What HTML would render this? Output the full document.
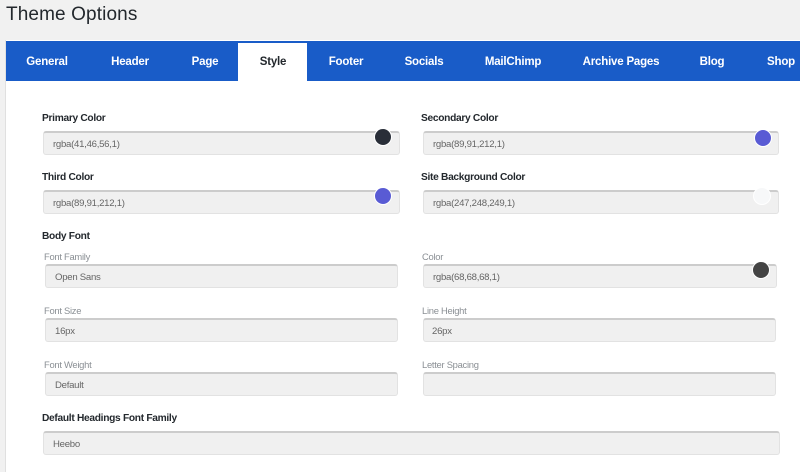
<!DOCTYPE html>
<html><head><meta charset="utf-8"><style>
html,body{margin:0;padding:0}
body{width:800px;height:472px;overflow:hidden;position:relative;background:#f1f1f1;font-family:"Liberation Sans",sans-serif}
.p{position:absolute;left:5px;top:40px;width:795px;height:432px;background:#fff;border-left:1px solid #e0e0e0;box-sizing:border-box}
.bar{position:absolute;left:6px;top:41px;width:794px;height:40px;background:#195cc8}
.act{position:absolute;left:238px;top:43px;width:69px;height:38px;background:#fff}
.t{position:absolute;white-space:nowrap;line-height:16px}
.tab{top:54px;font-size:11.5px;letter-spacing:-.2px;font-weight:bold;color:#fff;transform:translateX(-50%)}
.b{font-size:10.2px;letter-spacing:-.3px;font-weight:bold;color:#23282d}
.l{font-size:9.4px;letter-spacing:-.27px;color:#8a8f94}
.v{font-size:9.6px;letter-spacing:-.27px;color:#666}
.i{position:absolute;height:24px;box-sizing:border-box;background:#f0f0f0;border:1px solid #e2e2e2;border-top:2px solid #ccc;border-radius:3px}
.c{position:absolute;width:18px;height:18px;border-radius:50%;box-sizing:border-box;border:1.5px solid #fff}
</style></head><body>
<div class="t" style="left:6px;top:3px;font-size:19px;letter-spacing:.12px;line-height:24px;color:#23282d">Theme Options</div>
<div class="p"></div>
<div class="bar"></div>
<div class="act"></div>
<span class="t tab" style="left:47px">General</span>
<span class="t tab" style="left:130px">Header</span>
<span class="t tab" style="left:205px">Page</span>
<span class="t tab" style="left:273px;color:#23282d">Style</span>
<span class="t tab" style="left:346px">Footer</span>
<span class="t tab" style="left:424px">Socials</span>
<span class="t tab" style="left:513px">MailChimp</span>
<span class="t tab" style="left:621px">Archive Pages</span>
<span class="t tab" style="left:712px">Blog</span>
<span class="t tab" style="left:781px">Shop</span>

<span class="t b" style="left:42px;top:111px">Primary Color</span>
<div class="i" style="left:43px;top:131px;width:357px"></div>
<span class="t v" style="left:53px;top:137px">rgba(41,46,56,1)</span>
<div class="c" style="left:374px;top:128px;background:#292e38"></div>

<span class="t b" style="left:421px;top:111px">Secondary Color</span>
<div class="i" style="left:423px;top:131px;width:356px"></div>
<span class="t v" style="left:433px;top:137px">rgba(89,91,212,1)</span>
<div class="c" style="left:754px;top:129px;background:#595bd4"></div>

<span class="t b" style="left:42px;top:170px">Third Color</span>
<div class="i" style="left:43px;top:190px;width:357px"></div>
<span class="t v" style="left:53px;top:196px">rgba(89,91,212,1)</span>
<div class="c" style="left:374px;top:187px;background:#595bd4"></div>

<span class="t b" style="left:421px;top:170px">Site Background Color</span>
<div class="i" style="left:423px;top:190px;width:356px"></div>
<span class="t v" style="left:433px;top:196px">rgba(247,248,249,1)</span>
<div class="c" style="left:753px;top:187px;background:#f7f8f9"></div>

<span class="t b" style="left:42px;top:229px">Body Font</span>

<span class="t l" style="left:44px;top:249px">Font Family</span>
<div class="i" style="left:45px;top:264px;width:353px"></div>
<span class="t v" style="left:55px;top:270px">Open Sans</span>

<span class="t l" style="left:422px;top:249px">Color</span>
<div class="i" style="left:423px;top:264px;width:354px"></div>
<span class="t v" style="left:433px;top:270px">rgba(68,68,68,1)</span>
<div class="c" style="left:752px;top:261px;background:#444"></div>

<span class="t l" style="left:44px;top:303px">Font Size</span>
<div class="i" style="left:45px;top:318px;width:353px"></div>
<span class="t v" style="left:55px;top:324px">16px</span>

<span class="t l" style="left:422px;top:303px">Line Height</span>
<div class="i" style="left:423px;top:318px;width:353px"></div>
<span class="t v" style="left:432px;top:324px">26px</span>

<span class="t l" style="left:44px;top:357px">Font Weight</span>
<div class="i" style="left:45px;top:372px;width:353px"></div>
<span class="t v" style="left:55px;top:378px">Default</span>

<span class="t l" style="left:422px;top:357px">Letter Spacing</span>
<div class="i" style="left:423px;top:372px;width:353px"></div>

<span class="t b" style="left:42px;top:411px">Default Headings Font Family</span>
<div class="i" style="left:43px;top:431px;width:737px"></div>
<span class="t v" style="left:53px;top:437px">Heebo</span>
</body></html>
